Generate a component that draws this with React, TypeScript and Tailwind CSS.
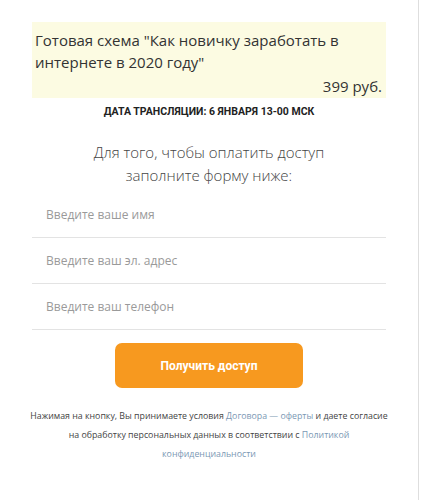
import React from 'react';

const fields = ['Введите ваше имя', 'Введите ваш эл. адрес', 'Введите ваш телефон'];

export default function App() {
  return (
    <div className="min-h-[500px] w-[419px] border-r border-[#dedede] bg-white">
      <div className="px-[32px] pt-[22px] pb-10" style={{ fontFamily: '"Open Sans", sans-serif' }}>
        {/* product box */}
        <div className="bg-[#fcfbe2] pl-[3px] pr-[4px] pt-[7px] pb-[1px] text-[15px] leading-[22px] text-[#333]">
          <p>Готовая схема "Как новичку заработать в интернете в 2020 году"</p>
          <p className="mt-[2px] text-right">399 руб.</p>
        </div>

        <p
          className="mt-[7px] text-center text-[10.5px] font-bold leading-[14px] text-[#222]"
          style={{ fontFamily: 'Roboto, sans-serif' }}
        >
          ДАТА ТРАНСЛЯЦИИ: 6 ЯНВАРЯ 13-00 МСК
        </p>

        <h2 className="mt-[22px] text-center text-[15px] font-light leading-[23px] text-[#444]">
          Для того, чтобы оплатить доступ
          <br />
          заполните форму ниже:
        </h2>

        {/* form */}
        <form className="mt-[5px] flex flex-col" onSubmit={(e) => e.preventDefault()}>
          {fields.map((f) => (
            <input
              key={f}
              placeholder={f}
              className="h-[46px] border-b border-[#e3e3e3] bg-transparent px-[14px] text-[12px] text-[#333] outline-none placeholder:text-[#9a9a9a]"
            />
          ))}
          <button
            type="submit"
            className="mx-auto mt-[13px] h-[45px] w-[188px] rounded-[7px] bg-[#f7991f] text-[12px] font-bold text-white"
            style={{ fontFamily: 'Roboto, sans-serif' }}
          >
            Получить доступ
          </button>
        </form>

        <p className="-mx-[8px] mt-[19px] text-center text-[8.8px] leading-[19px] text-[#444]">
          Нажимая на кнопку, Вы принимаете условия <a className="text-[#7b98b4]">Договора — оферты</a> и даете
          согласие
          <br />
          на обработку персональных данных в соответствии с <a className="text-[#7b98b4]">Политикой</a>
          <br />
          <a className="text-[#7b98b4]">конфиденциальности</a>
        </p>
      </div>
    </div>
  );
}
